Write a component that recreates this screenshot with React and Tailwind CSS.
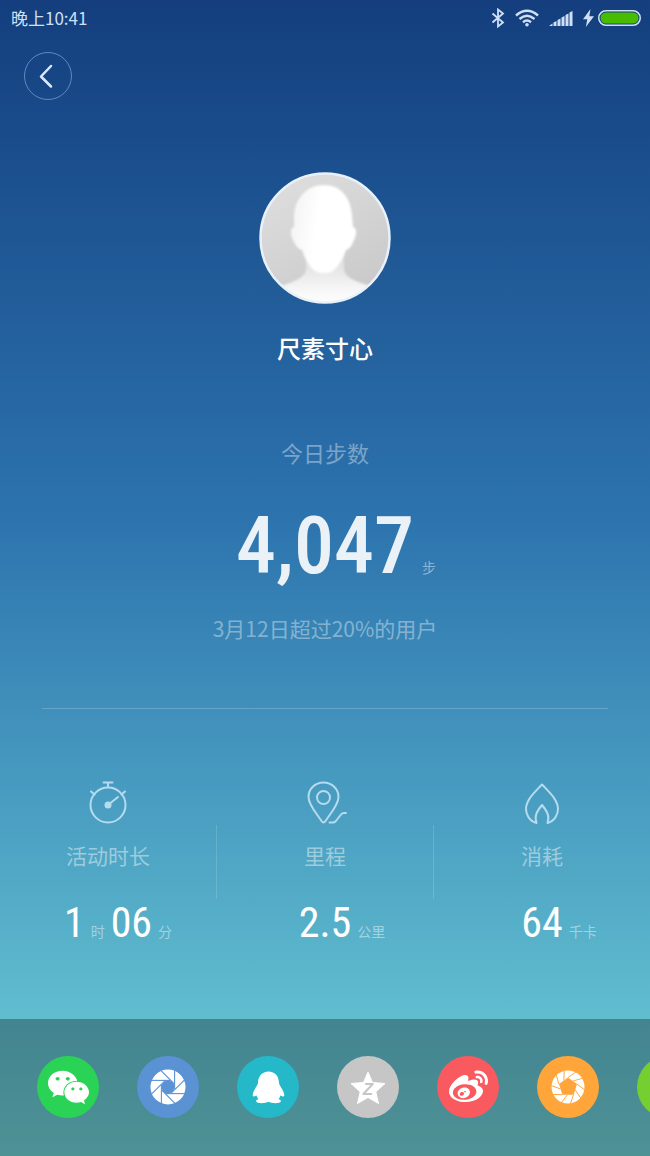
import { FaWeixin, FaWeibo } from "react-icons/fa";

const EIGHT_BLADES = [0, 45, 90, 135, 180, 225, 270, 315];
const FIVE_BLADES = [0, 72, 144, 216, 288];

function BluetoothIcon() {
  return (
    <svg width="14" height="20" viewBox="0 0 14 20" fill="none" stroke="currentColor" strokeWidth="1.8">
      <path d="M1.5 5.5 12 14.5 7 18.5V1.5L12 5.5 1.5 14.5" />
    </svg>
  );
}

function WifiIcon() {
  return (
    <svg width="24" height="18" viewBox="0 0 24 18" fill="none" stroke="currentColor" strokeWidth="2.4">
      <path d="M1 6.5Q12-3 23 6.5M4.5 10Q12 3.5 19.5 10M8 13.2Q12 10 16 13.2" />
      <circle cx="12" cy="15.8" r="1.8" fill="currentColor" stroke="none" />
    </svg>
  );
}

function SignalIcon() {
  return (
    <svg width="24" height="16" viewBox="0 0 24 16" fill="currentColor">
      <path d="M0 16 3.500 13.500V16zM4.500 12.500 7.500 11V16h-3zM8.500 10 11.500 8.500V16h-3zM12.500 7.500 15.500 6V16h-3zM16.500 5 19.500 3.500V16h-3zM20.500 2.500 23.500 1V16h-3z" />
    </svg>
  );
}

function BoltIcon() {
  return (
    <svg width="11" height="18" viewBox="0 0 11 18" fill="currentColor">
      <path d="M7.5 0 0 10.3H4.3L2.8 18 11 7.2H6.3z" />
    </svg>
  );
}

function BatteryIcon() {
  return (
    <svg width="43" height="16" viewBox="0 0 43 16">
      <rect x="0.75" y="0.75" width="41.5" height="14.5" rx="7.25" fill="none" stroke="#cfe0f5" strokeWidth="1.5" />
      <rect x="2.5" y="2.5" width="38" height="11" rx="5.5" fill="#48bd00" />
    </svg>
  );
}

function Avatar() {
  return (
    <svg className="mx-auto mt-18 block" width="132" height="132" viewBox="0 0 132 132" role="img" aria-label="头像">
      <defs>
        <linearGradient id="avatarBg" x1="0" y1="0" x2="0.6" y2="1">
          <stop offset="0" stopColor="#e0e0e0" />
          <stop offset="1" stopColor="#cacaca" />
        </linearGradient>
        <linearGradient id="neck" x1="0" y1="0" x2="0" y2="1">
          <stop offset="0" stopColor="#d8d8d8" />
          <stop offset="0.7" stopColor="#f8f8f8" />
          <stop offset="1" stopColor="#ffffff" />
        </linearGradient>
        <linearGradient id="face" x1="0" y1="0.4" x2="1" y2="0.6">
          <stop offset="0" stopColor="#f4f4f4" />
          <stop offset="0.4" stopColor="#ffffff" />
        </linearGradient>
        <filter id="soft">
          <feGaussianBlur stdDeviation="1" />
        </filter>
        <clipPath id="disc">
          <circle cx="66" cy="66" r="65" />
        </clipPath>
      </defs>
      <circle cx="66" cy="66" r="65" fill="url(#avatarBg)" />
      <g clipPath="url(#disc)">
        <path d="M47 80V98C46 106 34 110 22 114V136H112V114C98 110 86 106 85 98V80z" fill="url(#neck)" filter="url(#soft)" />
        <path
          d="M65 13C48 13 36 26 35 44L35 55C31 56 31 62 34 68C36 73 39 77 43 78C46 87 50 95 56 99C62 102 69 102 74 99C80 94 84 87 87 78C91 77 93 73 95 68C98 62 98 56 94 55L93 44C92 26 82 13 65 13z"
          fill="url(#face)"
          filter="url(#soft)"
        />
      </g>
      <circle cx="66" cy="66" r="64.5" fill="none" stroke="#e8f1fa" strokeWidth="2.5" />
    </svg>
  );
}

function StopwatchIcon() {
  return (
    <svg width="44" height="44" viewBox="0 0 44 44" fill="none" stroke="currentColor" strokeWidth="2" strokeLinecap="round">
      <circle cx="22" cy="24" r="17.5" />
      <path d="M17.5 1.5h9M22 1.500V6M5 10.5 8.5 13.5M39 10.5 35.5 13.5M22 24 32 16" />
      <circle cx="22" cy="24" r="3.5" fill="currentColor" stroke="none" />
    </svg>
  );
}

function RouteIcon() {
  return (
    <svg width="44" height="44" viewBox="0 0 44 44" fill="none" stroke="currentColor" strokeWidth="2" strokeLinecap="round" strokeLinejoin="round">
      <path d="M20.5 1.5C12 1.5 5.5 8 5.5 16C5.5 24 14 33 18.5 40Q20.5 43 22.5 40C27 33 35.5 24 35.5 16C35.5 8 29 1.5 20.5 1.5z" />
      <circle cx="20.5" cy="16.5" r="6.5" />
      <path d="M26.5 41.5H30Q31.500 41.5 32.500 40.500L38 33.500Q39 32 41 32H43" />
    </svg>
  );
}

function FlameIcon() {
  return (
    <svg width="44" height="44" viewBox="0 0 44 44" fill="none" stroke="currentColor" strokeWidth="2" strokeLinecap="round" strokeLinejoin="round">
      <path d="M16.5 42C9 40 6 33 6 28C6 19 14 12 22 3.5C30 12 38 19 38 28C38 33 35 40 27.5 42C30 35 27 30 22 24C17 30 14 35 16.5 42z" />
    </svg>
  );
}

function BlueShutterIcon() {
  return (
    <svg width="62" height="62" viewBox="-31 -31 62 62" fill="none">
      <circle r="12" stroke="#fff" strokeWidth="11" />
      {EIGHT_BLADES.map((a) => (
        <path key={a} d="M2-6.6H-17.5" stroke="#5b92d3" strokeWidth="1.1" transform={`rotate(${a})`} />
      ))}
    </svg>
  );
}

function OrangeShutterIcon() {
  return (
    <svg width="62" height="62" viewBox="-31 -31 62 62">
      <circle r="16.5" fill="#fff" />
      <path d="M0-9.5 9-3 5.6 7.7-5.6 7.7-9-3z" fill="#ffa53a" />
      {FIVE_BLADES.map((a) => (
        <path key={a} d="M0-9.5 9.5-16M5-6 15.5-9" fill="none" stroke="#ffa53a" strokeWidth="0.9" transform={`rotate(${a})`} />
      ))}
    </svg>
  );
}

function PenguinIcon() {
  return (
    <svg width="62" height="62" viewBox="0 0 62 62" fill="#fff">
      <path d="M31.500 15.500C25 15.500 21 20.500 21 27C20.500 30 16 34.500 15.700 39C15.700 40.500 17 41 18 40L19.500 39.500C20 41 20.500 42 21.500 43C19.500 43.500 19 44.500 19.200 45.500C20 48 29 47.500 31.500 45.800C34 47.500 43 48 43.800 45.500C44 44.500 43.500 43.500 41.500 43C42.500 42 43 41 43.500 39.500L45 40C46 41 47.300 40.500 47.300 39C47 34.500 42.500 30 42 27C42 20.500 38 15.500 31.500 15.500z" />
    </svg>
  );
}

function QzoneIcon() {
  return (
    <svg width="62" height="62" viewBox="0 0 62 62">
      <path
        d="M31 16 35.5 26.5 48 27.5 38.8 35.8 41.5 47.5 31 41.5 20.5 47.5 23.2 35.8 14 27.5 26.5 26.5z"
        fill="#fff"
        stroke="#fff"
        strokeLinejoin="round"
      />
      <text x="31" y="39" textAnchor="middle" fontFamily="Liberation Sans, sans-serif" fontSize="17" fontWeight="bold" fontStyle="italic" fill="#c6c6c6">
        Z
      </text>
    </svg>
  );
}

const METRICS = [
  { label: "活动时长", icon: <StopwatchIcon />, lead: { value: "1", unit: "时" }, value: "06", unit: "分" },
  { label: "里程", icon: <RouteIcon />, value: "2.5", unit: "公里" },
  { label: "消耗", icon: <FlameIcon />, value: "64", unit: "千卡" },
];

const SHARE_TARGETS = [
  { name: "微信", color: "bg-[#2ad255]", icon: <FaWeixin size={43} /> },
  { name: "朋友圈", color: "bg-[#5b92d3]", icon: <BlueShutterIcon /> },
  { name: "QQ", color: "bg-[#24b8c8]", icon: <PenguinIcon /> },
  { name: "QQ空间", color: "bg-[#c6c6c6]", icon: <QzoneIcon /> },
  { name: "微博", color: "bg-[#f85a5f]", icon: <FaWeibo size={39} /> },
  { name: "米聊广播", color: "bg-[#ffa53a]", icon: <OrangeShutterIcon /> },
  { name: "更多", color: "bg-[#76cf30]", icon: null },
];

function Metric({ label, icon, lead, value, unit }) {
  return (
    <div className="flex min-w-0 flex-1 flex-col items-center">
      <div className="text-[#b5dcee]">{icon}</div>
      <h2 className="mt-3.5 text-[21px] leading-8 text-white/45">{label}</h2>
      {/* the last unit hangs to the right so the figure stays centred */}
      <p className="mt-6 grid w-full grid-cols-[1fr_auto_1fr] items-baseline gap-x-1.5 whitespace-nowrap">
        <span />
        <span className="flex items-baseline gap-1.5 font-['Roboto_Condensed','Roboto',sans-serif] text-[42px] leading-14">
          {lead && (
            <>
              {lead.value}
              <span className="font-['Noto_Sans_CJK_SC',sans-serif] text-sm text-white/45">{lead.unit}</span>
            </>
          )}
          {value}
        </span>
        <span className="text-sm text-white/45">{unit}</span>
      </p>
    </div>
  );
}

export default function App() {
  return (
    <div className="flex min-h-screen flex-col overflow-x-hidden bg-linear-to-b from-[#143e7e] via-[#2d74ae] via-45% to-[#70d2d7] font-['Noto_Sans_CJK_SC',sans-serif] text-white">
      <header className="flex h-9 items-center justify-between pr-[9px] pl-[11px] text-[#cfe0f5]">
        <time className="text-[17px]">晚上10:41</time>
        <div className="flex items-center gap-2.5">
          <BluetoothIcon />
          <WifiIcon />
          <SignalIcon />
          <div className="flex items-center gap-1">
            <BoltIcon />
            <BatteryIcon />
          </div>
        </div>
      </header>

      <nav className="px-6 pt-4">
        <button aria-label="返回" className="flex size-12 items-center justify-center rounded-full border border-[#6288bd]">
          <svg width="48" height="48" viewBox="0 0 48 48" className="shrink-0" fill="none" stroke="#dce9f8" strokeWidth="2.5" strokeLinecap="round" strokeLinejoin="round">
            <path d="M27 14 17 24.5 27 34.5" />
          </svg>
        </button>
      </nav>

      <main className="flex-1 pb-14">
        <Avatar />
        <h1 className="mt-7 text-center text-2xl leading-8 font-medium">尺素寸心</h1>

        <section className="text-center">
          <h2 className="mt-18 text-[22px] leading-8 text-white/40">今日步数</h2>
          <p className="mt-7 grid grid-cols-[1fr_auto_1fr] items-baseline gap-x-2">
            <span />
            <span className="font-['Roboto_Condensed','Roboto',sans-serif] text-[80px] leading-[100px] font-medium text-white/90">4,047</span>
            <span className="text-left text-sm text-white/45">步</span>
          </p>
          <p className="mt-4 text-[21px] leading-8 text-white/40">3月12日超过20%的用户</p>
        </section>

        <hr className="mx-[42px] mt-16 border-white/20" />

        <section className="mt-18 flex">
          <Metric {...METRICS[0]} />
          <div className="mt-11 h-[74px] w-px bg-white/15" />
          <Metric {...METRICS[1]} />
          <div className="mt-11 h-[74px] w-px bg-white/15" />
          <Metric {...METRICS[2]} />
        </section>
      </main>

      <footer className="flex gap-[38px] overflow-hidden bg-black/30 pt-[37px] pb-[38px] pl-[37px]">
        {SHARE_TARGETS.map((t) => (
          <button key={t.name} aria-label={t.name} className={`flex size-[62px] shrink-0 items-center justify-center rounded-full ${t.color}`}>
            {t.icon}
          </button>
        ))}
      </footer>
    </div>
  );
}
